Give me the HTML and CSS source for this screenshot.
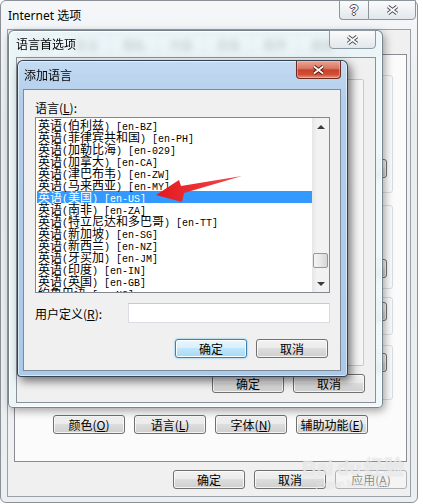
FILE: index.html
```html
<!DOCTYPE html>
<html lang="zh-CN">

<head>
    <meta charset="UTF-8">
    <title>Internet 选项</title>
    <link rel="stylesheet" href="styles.css">
</head>

<body>
    <div class="desktop">

        <!-- Internet 选项 -->
        <section class="win win-options">
            <header class="titlebar">
                <span class="title">Internet 选项</span>
                <div class="caption">
                    <span class="cap cap-help">?</span>
                    <span class="cap cap-close">
                        <svg width="13" height="10" viewBox="0 0 13 10"><path d="M2 1.5L11 8.5M11 1.5L2 8.5" stroke="#4d5259" stroke-width="3.6"/><path d="M2 1.5L11 8.5M11 1.5L2 8.5" stroke="#fff" stroke-width="1.6"/></svg>
                    </span>
                </div>
            </header>
            <div class="client">
                <div class="tabs">
                    <span class="tab active">常规</span>
                    <span class="tab">安全</span>
                    <span class="tab">隐私</span>
                    <span class="tab">内容</span>
                    <span class="tab">连接</span>
                    <span class="tab">程序</span>
                    <span class="tab">高级</span>
                </div>
                <div class="tab-panel">
                    <div class="group g1"><button class="btn">设置(S)</button></div>
                    <div class="group g2"><button class="btn">设置(I)</button></div>
                    <div class="group g3"><button class="btn">删除(D)</button></div>
                    <div class="group g4"><button class="btn">设置(T)</button></div>
                    <div class="panel-buttons">
                        <button class="btn w83">颜色(<u>O</u>)</button>
                        <button class="btn w83">语言(<u>L</u>)</button>
                        <button class="btn w77">字体(<u>N</u>)</button>
                        <button class="btn w84">辅助功能(<u>E</u>)</button>
                    </div>
                </div>
                <div class="dlg-buttons">
                    <button class="btn">确定</button>
                    <button class="btn">取消</button>
                    <button class="btn" disabled>应用(<u>A</u>)</button>
                </div>
            </div>
        </section>

        <!-- 语言首选项 -->
        <section class="win win-pref">
            <header class="titlebar">
                <span class="title">语言首选项</span>
                <span class="cap cap-close2">
                    <svg width="13" height="10" viewBox="0 0 13 10"><path d="M2 1.5L11 8.5M11 1.5L2 8.5" stroke="#4d5259" stroke-width="3.6"/><path d="M2 1.5L11 8.5M11 1.5L2 8.5" stroke="#fff" stroke-width="1.6"/></svg>
                </span>
            </header>
            <div class="client">
                <div class="pref-panel"></div>
                <div class="dlg-buttons">
                    <button class="btn">确定</button>
                    <button class="btn">取消</button>
                </div>
            </div>
        </section>

        <!-- 添加语言 -->
        <section class="win win-add">
            <header class="titlebar">
                <span class="title">添加语言</span>
                <span class="cap cap-red">
                    <svg width="13" height="10" viewBox="0 0 13 10"><path d="M2 1.5L11 8.5M11 1.5L2 8.5" stroke="#5a1e14" stroke-width="3.6"/><path d="M2 1.5L11 8.5M11 1.5L2 8.5" stroke="#fff" stroke-width="1.6"/></svg>
                </span>
            </header>
            <div class="client">
                <label class="field-label">语言(<u>L</u>):</label>
                <div class="lang-list">
                    <ul class="lang-items">
                        <li>英语<i>(</i>伯利兹<i>) [en-BZ]</i></li>
                        <li>英语<i>(</i>菲律宾共和国<i>) [en-PH]</i></li>
                        <li>英语<i>(</i>加勒比海<i>) [en-029]</i></li>
                        <li>英语<i>(</i>加拿大<i>) [en-CA]</i></li>
                        <li>英语<i>(</i>津巴布韦<i>) [en-ZW]</i></li>
                        <li>英语<i>(</i>马来西亚<i>) [en-MY]</i></li>
                        <li class="sel">英语<i>(</i>美国<i>) [en-US]</i></li>
                        <li>英语<i>(</i>南非<i>) [en-ZA]</i></li>
                        <li>英语<i>(</i>特立尼达和多巴哥<i>) [en-TT]</i></li>
                        <li>英语<i>(</i>新加坡<i>) [en-SG]</i></li>
                        <li>英语<i>(</i>新西兰<i>) [en-NZ]</i></li>
                        <li>英语<i>(</i>牙买加<i>) [en-JM]</i></li>
                        <li>英语<i>(</i>印度<i>) [en-IN]</i></li>
                        <li>英语<i>(</i>英国<i>) [en-GB]</i></li>
                        <li>约鲁巴语<i> [yo-NG]</i></li>
                    </ul>
                    <div class="scrollbar">
                        <span class="sb-btn"><b class="tri-up"></b></span>
                        <span class="sb-track"><span class="sb-thumb"></span></span>
                        <span class="sb-btn"><b class="tri-down"></b></span>
                    </div>
                </div>
                <div class="custom-row">
                    <label class="custom-label">用户定义(<u>R</u>):</label>
                    <input type="text" class="custom-input">
                </div>
                <div class="dlg-buttons">
                    <button class="btn default">确定</button>
                    <button class="btn">取消</button>
                </div>
            </div>
        </section>

        <svg class="arrow" width="423" height="504" viewBox="0 0 423 504">
            <defs>
                <linearGradient id="red" x1="0" y1="0" x2="1" y2="0">
                    <stop offset="0" stop-color="#e3191f"/>
                    <stop offset="1" stop-color="#f24a4a"/>
                </linearGradient>
            </defs>
            <polygon points="156,195 179,180 181,186 242,176 184,193 182,202" fill="url(#red)"/>
        </svg>

        <div class="watermark">Bai<span>du</span>经验<small>jingyan.baidu.com</small></div>
    </div>
</body>

</html>
```

FILE: styles.css
```css
body {
    margin: 0;
    background: #fff;
    font-family: "Noto Sans CJK SC", "Noto Sans", sans-serif;
    font-size: 12px;
    color: #000;
}

u {
    text-decoration: underline;
}

.desktop {
    position: relative;
    width: 423px;
    height: 504px;
    overflow: hidden;
}

/* windows */

.win {
    position: absolute;
    box-sizing: border-box;
    display: flex;
    flex-direction: column;
}

.titlebar {
    display: flex;
    align-items: center;
    flex-shrink: 0;
}

.title {
    font-size: 12px;
    line-height: 16px;
    white-space: nowrap;
}

.client {
    flex: 1;
    display: flex;
    flex-direction: column;
    background: #f0f0f0;
    min-height: 0;
}

.cap {
    display: flex;
    align-items: center;
    justify-content: center;
    box-sizing: border-box;
}

/* Internet 选项 */

.win-options {
    left: 0;
    top: 0;
    width: 418px;
    height: 503px;
    border: 1px solid #8a9096;
    border-radius: 6px;
    background: linear-gradient(#f5f7f9, #e9edf0 120px, #eceff2);
    padding: 0 6px 5px 6px;
}

.win-options .titlebar {
    height: 28px;
    align-items: flex-start;
}

.win-options .title {
    padding: 7px 0 0 1px;
    font-family: "Noto Sans", "Noto Sans CJK SC", sans-serif;
}

.caption {
    display: flex;
    margin: -1px -5px 0 auto;
}

.cap-help,
.cap-close,
.cap-close2 {
    height: 20px;
    border: 1px solid #8d949b;
    background: linear-gradient(#fbfbfb, #eef1f4 50%, #e3e7eb);
}

.cap-help {
    width: 29px;
    border-right: 0;
    border-radius: 0 0 0 4px;
    font: bold 14px "Liberation Sans", sans-serif;
    color: #fff;
    text-shadow: 1px 0 #4d5259, -1px 0 #4d5259, 0 1px #4d5259, 0 -1px #4d5259;
}

.cap-close {
    width: 48px;
    border-radius: 0 0 4px 0;
}

.win-options .client {
    border: 1px solid #9aa0a6;
    padding: 4px 3px 7px 6px;
}

.tabs {
    display: flex;
    height: 20px;
    padding-left: 2px;
    flex-shrink: 0;
}

.tab {
    width: 46px;
    text-align: center;
    line-height: 19px;
    border: 1px solid #898c95;
    border-bottom: 0;
    margin-right: -1px;
    background: linear-gradient(#f2f2f2, #e5e5e5);
}

.tab.active {
    background: #fff;
}

.tab-panel {
    flex: 1;
    min-height: 0;
    border: 1px solid #898c95;
    background: #fbfbfb;
    padding: 0 13px 0 9px;
    display: flex;
    flex-direction: column;
}

.group {
    box-sizing: border-box;
    flex-shrink: 0;
    border: 1px solid #d5dfe5;
    border-radius: 3px;
    display: flex;
    justify-content: flex-end;
    padding: 0 5px;
}

.group .btn {
    width: 75px;
}

.g1 {
    margin-top: 20px;
    height: 118px;
    align-items: flex-end;
    padding-bottom: 14px;
}

.g2 {
    margin-top: 12px;
    height: 84px;
    align-items: flex-end;
    padding-bottom: 10px;
}

.g3 {
    margin-top: 8px;
    height: 38px;
    padding-top: 4px;
}

.g4 {
    margin-top: 10px;
    height: 55px;
    padding-top: 7px;
}

.panel-buttons {
    display: flex;
    justify-content: center;
    gap: 9px;
    margin-top: 15px;
    padding-left: 4px;
}

.w83 { width: 83px; }
.w77 { width: 77px; }
.w84 { width: 84px; }

.dlg-buttons {
    display: flex;
    justify-content: flex-end;
    gap: 9px;
    margin-top: 8px;
    flex-shrink: 0;
}

/* buttons */

.btn {
    box-sizing: border-box;
    width: 72px;
    height: 19px;
    padding: 0;
    border: 1px solid #707070;
    border-radius: 3px;
    background: linear-gradient(#f2f2f2, #ebebeb 45%, #dddddd 50%, #cfcfcf);
    box-shadow: inset 0 0 0 1px rgba(255, 255, 255, 0.75);
    font-family: "Noto Sans CJK SC", sans-serif;
    font-size: 12px;
    line-height: 16px;
    color: #000;
}

.btn.default {
    border-color: #3c7fb1;
    background: linear-gradient(#eaf6fd, #d9f0fc 45%, #bee6fd 50%, #a7d9f5);
    box-shadow: inset 0 0 0 1px #fff, 0 0 2px #41b6e6;
}

.btn[disabled] {
    border-color: #adb2b5;
    background: #f4f4f4;
    color: #8a8a8a;
    box-shadow: none;
}

/* 语言首选项 */

.win-pref {
    left: 8px;
    top: 30px;
    width: 375px;
    height: 378px;
    border: 1px solid rgba(40, 55, 70, 0.6);
    border-radius: 6px 6px 5px 5px;
    background: rgba(236, 249, 253, 0.78);
    -webkit-backdrop-filter: blur(3px);
    backdrop-filter: blur(3px);
    padding: 0 6px 4px 7px;
    box-shadow: 2px 3px 8px rgba(0, 0, 0, 0.35), inset 0 0 0 1px rgba(255, 255, 255, 0.8);
}

.win-pref .titlebar {
    height: 26px;
}

.cap-close2 {
    width: 47px;
    height: 19px;
    margin: -1px 0 0 auto;
    align-self: flex-start;
    border-radius: 0 0 4px 4px;
    border-color: #8e9aa3;
}

.win-pref .client {
    border: 1px solid #8a9299;
}

.pref-panel {
    flex: 1;
    margin: 21px 11px 0 6px;
    border: 1px solid #c5cacf;
    border-radius: 2px;
    background: #f6f6f6;
}

.win-pref .dlg-buttons {
    padding: 0 10px 9px 0;
}

/* 添加语言 */

.win-add {
    left: 17px;
    top: 60px;
    width: 331px;
    height: 317px;
    border: 1px solid rgba(20, 30, 45, 0.8);
    border-radius: 6px 6px 4px 4px;
    background: linear-gradient(rgba(190, 216, 242, 0.9), rgba(172, 202, 234, 0.92) 40px, rgba(166, 198, 232, 0.94));
    -webkit-backdrop-filter: blur(3px);
    backdrop-filter: blur(3px);
    padding: 0 6px 5px 5px;
    box-shadow: 3px 4px 10px rgba(0, 0, 0, 0.55), inset 0 0 0 1px rgba(255, 255, 255, 0.55);
}

.win-add .titlebar {
    height: 28px;
    align-items: flex-start;
}

.win-add .title {
    padding: 6px 0 0 1px;
}

.cap-red {
    width: 45px;
    height: 18px;
    margin-left: auto;
    border: 1px solid #6e2a20;
    border-top: 0;
    border-radius: 0 0 4px 4px;
    background: linear-gradient(#eaa793, #d9735f 45%, #c8432c 52%, #d14e36 80%, #e39a84);
    box-shadow: inset 0 0 0 1px rgba(255, 200, 190, 0.45);
}

.win-add .client {
    border: 1px solid #7f8a98;
    padding: 10px 10px 0 11px;
}

.field-label {
    display: block;
    line-height: 16px;
    margin-bottom: 1px;
}

.lang-list {
    display: flex;
    box-sizing: border-box;
    height: 176px;
    border: 1px solid #828790;
    background: #fff;
}

.lang-items {
    flex: 1;
    list-style: none;
    margin: 0;
    padding: 1px 0 0 1px;
    overflow: hidden;
}

.lang-items li {
    height: 12px;
    line-height: 12px;
    padding-left: 1px;
    white-space: nowrap;
    font-size: 12px;
}

.lang-items i {
    font: normal 10px/12px "Liberation Mono", monospace;
}

.lang-items li.sel {
    background: #3399ff;
    color: #fff;
}

.scrollbar {
    width: 17px;
    display: flex;
    flex-direction: column;
    background: linear-gradient(90deg, #e6e6e6, #f2f2f2 30%, #f2f2f2);
}

.sb-btn {
    height: 17px;
    display: flex;
    align-items: center;
    justify-content: center;
}

.tri-up {
    border-left: 4px solid transparent;
    border-right: 4px solid transparent;
    border-bottom: 4px solid #3c3c3c;
}

.tri-down {
    border-left: 4px solid transparent;
    border-right: 4px solid transparent;
    border-top: 4px solid #3c3c3c;
}

.sb-track {
    flex: 1;
    padding: 0 1px;
}

.sb-thumb {
    display: block;
    height: 15px;
    margin-top: 118px;
    box-sizing: border-box;
    border: 1px solid #979797;
    border-radius: 2px;
    background: linear-gradient(90deg, #f3f3f3, #e8e8e8 50%, #d6d6d6);
}

.custom-row {
    display: flex;
    align-items: center;
    margin-top: 10px;
}

.custom-label {
    width: 93px;
    flex-shrink: 0;
}

.custom-input {
    flex: 1;
    box-sizing: border-box;
    height: 20px;
    border: 1px solid #d9dde2;
    border-top-color: #c4c9cf;
    background: #fff;
    margin: 0;
}

.win-add .dlg-buttons {
    margin-top: 16px;
    padding-right: 2px;
}

/* overlays */

.arrow {
    position: absolute;
    left: 0;
    top: 0;
    pointer-events: none;
}

.watermark {
    position: absolute;
    left: 302px;
    top: 452px;
    font: bold 20px "Liberation Sans", sans-serif;
    color: rgba(255, 255, 255, 0.6);
    text-shadow: 0 0 1px rgba(160, 160, 160, 0.5);
    pointer-events: none;
    white-space: nowrap;
}

.watermark span {
    margin: 0 2px 0 4px;
}

.watermark small {
    display: block;
    font: 9px "Liberation Sans", sans-serif;
    margin-top: -2px;
    padding-left: 14px;
}
```
